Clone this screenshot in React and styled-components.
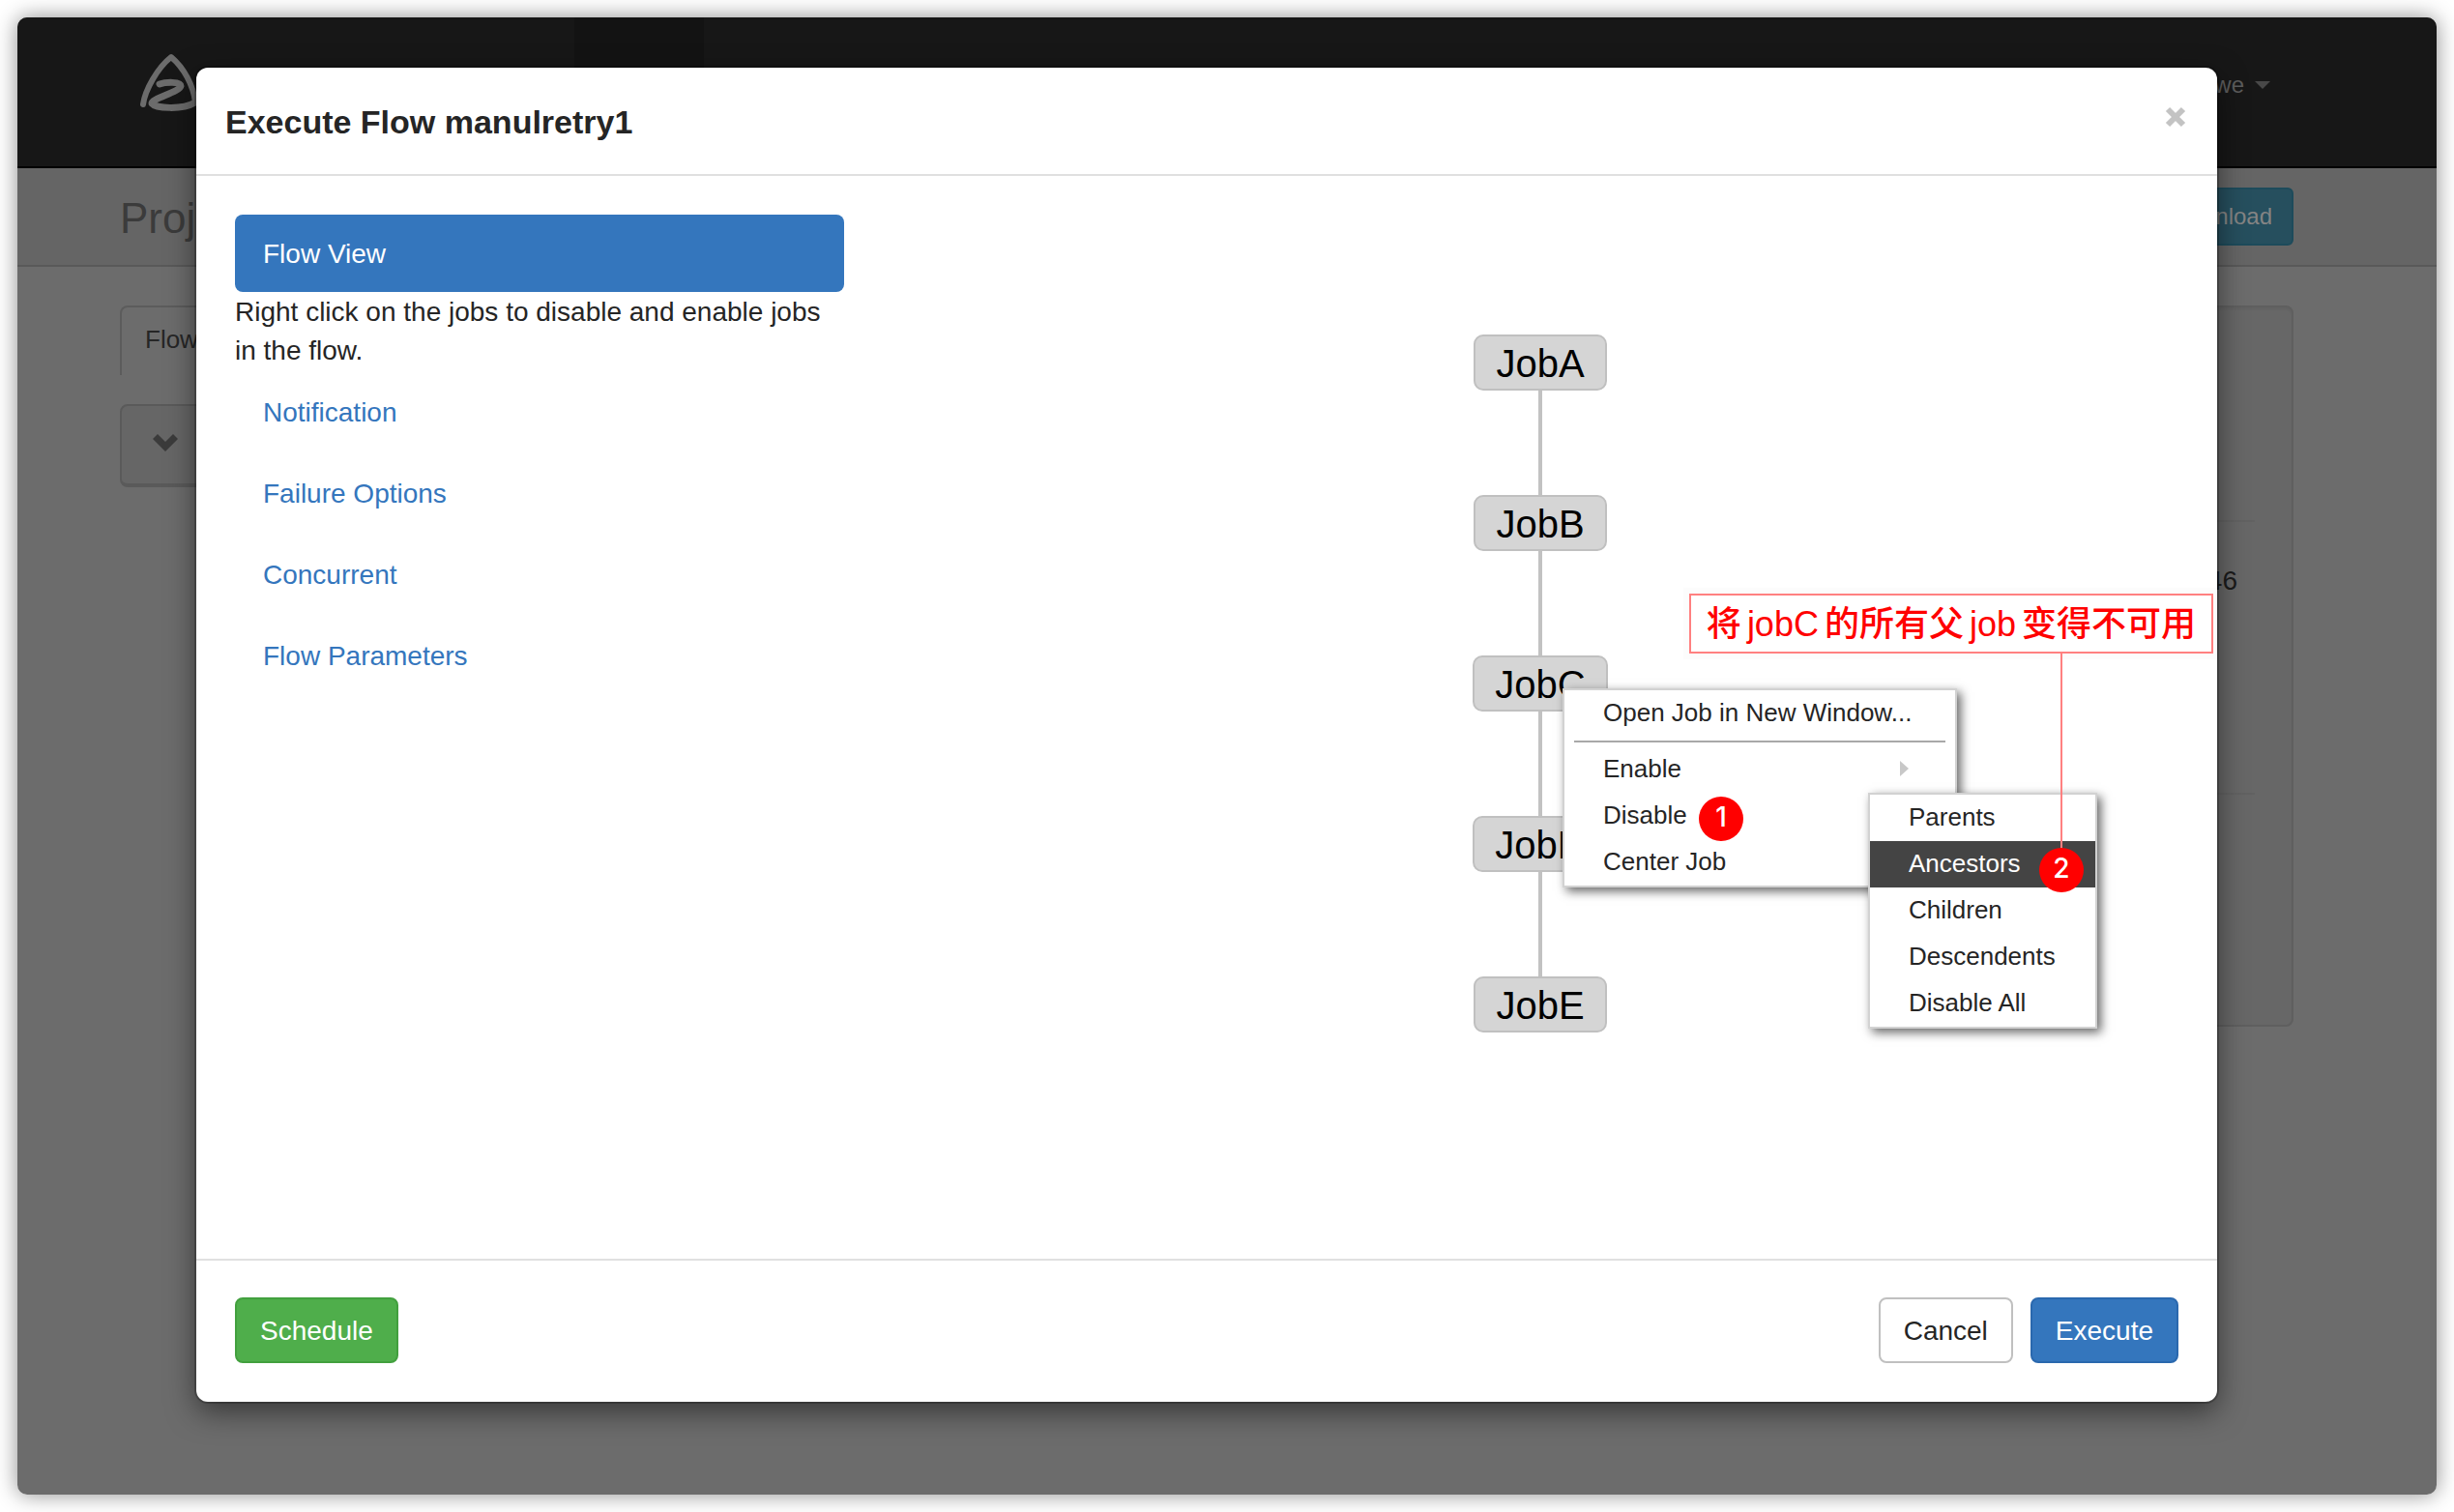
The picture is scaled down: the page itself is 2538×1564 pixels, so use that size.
import React, { useState } from "react";
import styled, { createGlobalStyle } from "styled-components";

const GlobalStyle = createGlobalStyle`
  * {
    box-sizing: border-box;
  }

  body {
    margin: 0;
    background-color: #fff;
    color: #252525;
    font-family: "Liberation Sans", Arial, "Noto Sans CJK SC", sans-serif;
    font-size: 28px;
    line-height: 40px;
  }

  button {
    font-family: inherit;
    cursor: pointer;
  }
`;

const Screen = styled.div`
  min-height: 100vh;
  padding: 18px;
  display: flex;
`;

const Browser = styled.div`
  flex: 1;
  display: grid;
  grid-template-columns: minmax(0, 1fr);
  border-radius: 10px;
  overflow: hidden;
  background-color: #6c6c6c;
`;

const Shadow = styled.div`
  flex: 1;
  display: flex;
  border-radius: 10px;
  box-shadow: 0 0 22px rgba(0, 0, 0, 0.45);
`;

/*================ page under the modal ================*/
const Page = styled.div`
  grid-area: 1 / 1;
`;

const Navbar = styled.nav`
  display: flex;
  justify-content: space-between;
  height: 156px;
  padding: 0 172px 0 108px;
  background-color: #171717;
  border-bottom: 2px solid #000;
`;

const NavLeft = styled.div`
  display: flex;
  gap: 378px;
`;

const Logo = styled.svg`
  width: 90px;
  height: 66px;
  margin-top: 34px;
`;

const NavActive = styled.div`
  width: 134px;
  background-color: #131313;
`;

const UserMenu = styled.button`
  display: flex;
  align-items: center;
  gap: 11px;
  height: 40px;
  margin-top: 50px;
  padding: 0;
  border: 0;
  background: none;
  color: #5c5c5c;
  font-size: 24px;
`;

const Caret = styled.span`
  border-top: 8px solid #484848;
  border-left: 8px solid transparent;
  border-right: 8px solid transparent;
`;

const TitleBar = styled.div`
  display: flex;
  justify-content: space-between;
  align-items: center;
  height: 102px;
  padding: 0 148px 0 106px;
  background-color: #656565;
  border-bottom: 2px solid #595959;
`;

const PageTitle = styled.h1`
  margin: 0;
  padding-top: 4px;
  color: #3b3b3b;
  font-size: 44px;
  font-weight: 400;
`;

const Download = styled.button`
  height: 60px;
  padding: 0 20px;
  border: 2px solid #1d4b5b;
  border-radius: 6px;
  background-color: #264f5e;
  color: #848484;
  font-size: 24px;
`;

const Columns = styled.div`
  display: flex;
  justify-content: space-between;
  padding: 40px 148px 0 106px;
`;

const LeftColumn = styled.div`
  width: 1640px;
`;

const Tab = styled.a`
  display: block;
  width: 120px;
  height: 72px;
  padding: 13px 24px;
  border: 2px solid #5c5c5c;
  border-bottom: 0;
  border-radius: 8px 8px 0 0;
  color: #262626;
  font-size: 26px;
  text-decoration: none;
`;

const FlowPanel = styled.div`
  height: 86px;
  margin-top: 30px;
  padding: 29px 30px;
  border: 2px solid #5a5a5a;
  border-bottom-width: 4px;
  border-radius: 8px;
  background-color: #666;
`;

const Chevron = styled.svg`
  display: block;
  width: 30px;
  height: 20px;
`;

const Well = styled.div`
  width: 540px;
  height: 746px;
  padding: 220px 38px 0;
  border: 2px solid #5f5f5f;
  border-radius: 8px;
  background-color: #676767;
  box-shadow: inset 0 2px 2px rgba(0, 0, 0, 0.05);
`;

const WellRow = styled.div`
  height: 282px;
  padding: 41px 18px;
  border-top: 2px solid #626262;
  text-align: right;
  color: #1b1b1b;
`;

/*================ modal ================*/
const ModalWrapper = styled.div`
  grid-area: 1 / 1;
  z-index: 1;
  padding: 52px 227px 96px 185px;
`;

const ModalContent = styled.div`
  display: flex;
  flex-direction: column;
  min-height: 100%;
  border-radius: 12px;
  background-color: #fff;
  box-shadow: 0 0 0 2px rgba(0, 0, 0, 0.2), 0 10px 30px rgba(0, 0, 0, 0.5);
`;

const ModalHeader = styled.div`
  display: flex;
  justify-content: space-between;
  height: 112px;
  padding: 30px;
  border-bottom: 2px solid #e0e0e0;
`;

const ModalTitle = styled.h2`
  margin: 0;
  font-size: 34px;
  line-height: 52px;
`;

const CloseButton = styled.button`
  display: block;
  height: 42px;
  padding: 0;
  border: 0;
  background: none;
`;

const CloseIcon = styled.svg`
  display: block;
  width: 26px;
  height: 26px;
`;

const ModalBody = styled.div`
  flex: 1;
  display: flex;
  padding: 40px;
`;

const SideNav = styled.div`
  flex: none;
  width: 630px;
`;

const NavItem = styled.a`
  display: block;
  margin-bottom: ${(props) => (props.$active ? "0" : "4px")};
  padding: 21px 29px 19px;
  border-radius: 8px;
  background-color: ${(props) => (props.$active ? "#3476bd" : "transparent")};
  color: ${(props) => (props.$active ? "#fff" : "#3476bd")};
  text-decoration: none;
`;

const NavHint = styled.p`
  margin: 0;
  padding: 1px 0 3px;
`;

const Graph = styled.div`
  flex: 1;
  position: relative;
  display: flex;
  flex-direction: column;
  align-items: center;
  padding: 124px 0 0 60px;
`;

const JobNode = styled.div`
  height: 58px;
  padding: 0 21px;
  border: 2px solid #c0c0c0;
  border-radius: 10px;
  background-color: #d5d5d5;
  color: #000;
  font-size: 40px;
  line-height: 56px;
`;

const Edge = styled.div`
  width: 4px;
  height: 108px;
  background-color: #c2c2c2;
`;

const Menu = styled.ul`
  position: absolute;
  top: ${(props) => props.$top}px;
  right: ${(props) => props.$right}px;
  width: ${(props) => props.$width}px;
  margin: 0;
  padding: 0;
  list-style: none;
  border: 2px solid #d2d2d2;
  background-color: #fff;
  box-shadow: 4px 4px 10px rgba(0, 0, 0, 0.6);
`;

const MenuItem = styled.button`
  display: flex;
  justify-content: space-between;
  align-items: center;
  width: 100%;
  height: 48px;
  padding: 0 48px 2px 40px;
  border: 0;
  background-color: ${(props) => (props.$active ? "#444" : "transparent")};
  color: ${(props) => (props.$active ? "#fff" : "#252525")};
  font-size: 26px;
  white-space: nowrap;
`;

const Separator = styled.li`
  height: 2px;
  margin: 4px 10px;
  background-color: #a8a8a8;
`;

const SubArrow = styled.span`
  border-left: 9px solid #c8c8c8;
  border-top: 8px solid transparent;
  border-bottom: 8px solid transparent;
`;

/*================ notes over the graph ================*/
const Note = styled.div`
  position: absolute;
  top: 392px;
  right: -36px;
  height: 62px;
  padding: 0 16px;
  border: 2px solid #ff8080;
  background-color: #fff;
  color: #f00;
  font-family: "Liberation Sans", "Noto Sans CJK SC", sans-serif;
  font-size: 36px;
  font-weight: 500;
  line-height: 60px;
  white-space: nowrap;
  box-shadow: 0 0 0 6px rgba(0, 0, 0, 0.01);
`;

const Latin = styled.span`
  margin: 0 6px;
`;

const NoteLine = styled.div`
  position: absolute;
  top: 454px;
  right: 120px;
  width: 2px;
  height: 202px;
  background-color: #ff8080;
`;

const Badge = styled.span`
  position: absolute;
  top: ${(props) => props.$top}px;
  right: ${(props) => props.$right}px;
  width: 46px;
  height: 46px;
  border-radius: 50%;
  background-color: #f00;
  color: #fff;
  font-family: Inter, "Liberation Sans", sans-serif;
  font-size: 28px;
  font-weight: 500;
  line-height: 42px;
  text-align: center;
`;

const ModalFooter = styled.div`
  display: flex;
  gap: 18px;
  padding: 38px 40px 40px;
  border-top: 2px solid #e0e0e0;
`;

const buttonColors = {
  default: { background: "#fff", border: "#c0c0c0", text: "#252525" },
  success: { background: "#4fae4b", border: "#42a03e", text: "#fff" },
  primary: { background: "#3476bd", border: "#2a68ae", text: "#fff" },
};

const Button = styled.button`
  height: 68px;
  padding: 2px 24px 0;
  border: 2px solid ${(props) => buttonColors[props.$kind].border};
  border-radius: 8px;
  background-color: ${(props) => buttonColors[props.$kind].background};
  color: ${(props) => buttonColors[props.$kind].text};
  font-size: 28px;

  &:first-child {
    margin-right: auto;
  }
`;

const jobs = ["JobA", "JobB", "JobC", "JobD", "JobE"];
const options = ["Notification", "Failure Options", "Concurrent", "Flow Parameters"];
const disableOptions = ["Parents", "Ancestors", "Children", "Descendents", "Disable All"];

function ProjectPage() {
  return (
    <Page>
      <Navbar>
        <NavLeft>
          <Logo viewBox="0 0 90 66" fill="none" stroke="#6c6c6c" strokeLinecap="round" strokeLinejoin="round">
            <path d="M22 56 C24 41 37 18 51 7 C64 18 74 36 76 54" strokeWidth="6" />
            <path d="M39 35 C45 33 61 32 61 37 C60 43 30 50 31 55 C35 60 62 62 76 54" strokeWidth="7" />
          </Logo>
          <NavActive />
        </NavLeft>
        <UserMenu>
          we <Caret />
        </UserMenu>
      </Navbar>
      <TitleBar>
        <PageTitle>Project</PageTitle>
        <Download>Download</Download>
      </TitleBar>
      <Columns>
        <LeftColumn>
          <Tab href="#flows">Flows</Tab>
          <FlowPanel>
            <Chevron viewBox="0 0 30 20" fill="#3b3b3b">
              <path d="M7 0 L15 8 L23 0 L28 5 L15 18 L2 5 Z" />
            </Chevron>
          </FlowPanel>
        </LeftColumn>
        <Well>
          <WellRow>46</WellRow>
          <WellRow />
        </Well>
      </Columns>
    </Page>
  );
}

function ContextMenu() {
  const [selected, setSelected] = useState("Ancestors");

  return (
    <>
      <Menu $top={490} $right={229} $width={408}>
        <li>
          <MenuItem>Open Job in New Window...</MenuItem>
        </li>
        <Separator />
        <li>
          <MenuItem>
            Enable <SubArrow />
          </MenuItem>
        </li>
        <li>
          <MenuItem>Disable</MenuItem>
        </li>
        <li>
          <MenuItem>Center Job</MenuItem>
        </li>
      </Menu>
      <Menu $top={598} $right={84} $width={237}>
        {disableOptions.map((option) => (
          <li key={option}>
            <MenuItem
              $active={option === selected}
              onMouseEnter={() => setSelected(option)}
            >
              {option}
            </MenuItem>
          </li>
        ))}
      </Menu>
    </>
  );
}

function App() {
  return (
    <Screen>
      <GlobalStyle />
      <Shadow>
        <Browser>
          <ProjectPage />
          <ModalWrapper>
            <ModalContent role="dialog" aria-labelledby="modal-title">
              <ModalHeader>
                <ModalTitle id="modal-title">Execute Flow manulretry1</ModalTitle>
                <CloseButton aria-label="Close">
                  <CloseIcon viewBox="0 0 26 26" stroke="#c3c3c3" strokeWidth="6">
                    <path d="M5 5 L21 21 M21 5 L5 21" />
                  </CloseIcon>
                </CloseButton>
              </ModalHeader>
              <ModalBody>
                <SideNav>
                  <NavItem href="#flow-view" $active>
                    Flow View
                  </NavItem>
                  <NavHint>
                    Right click on the jobs to disable and enable jobs in the flow.
                  </NavHint>
                  {options.map((option) => (
                    <NavItem key={option} href="#options">
                      {option}
                    </NavItem>
                  ))}
                </SideNav>
                <Graph>
                  {jobs.map((job, index) => (
                    <React.Fragment key={job}>
                      {index > 0 && <Edge />}
                      <JobNode>{job}</JobNode>
                    </React.Fragment>
                  ))}
                  <ContextMenu />
                  <Note>
                    将<Latin>jobC</Latin>的所有父<Latin>job</Latin>变得不可用
                  </Note>
                  <NoteLine />
                  <Badge $top={602} $right={450}>
                    1
                  </Badge>
                  <Badge $top={655} $right={98}>
                    2
                  </Badge>
                </Graph>
              </ModalBody>
              <ModalFooter>
                <Button $kind="success">Schedule</Button>
                <Button $kind="default">Cancel</Button>
                <Button $kind="primary">Execute</Button>
              </ModalFooter>
            </ModalContent>
          </ModalWrapper>
        </Browser>
      </Shadow>
    </Screen>
  );
}

export default App;
